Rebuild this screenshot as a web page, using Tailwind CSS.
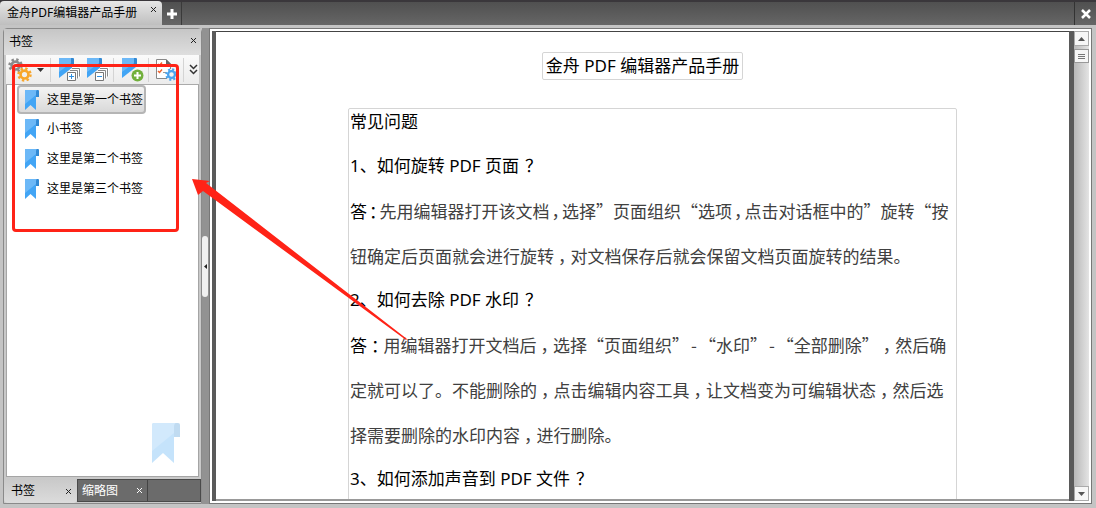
<!DOCTYPE html>
<html lang="zh-CN">
  <head>
    <meta charset="UTF-8" />
    <meta name="viewport" content="width=device-width, initial-scale=1.0" />
    <title>金舟PDF编辑器产品手册</title>
    <script src="https://cdn.jsdelivr.net/npm/@tailwindcss/browser@4"></script>
  </head>
  <body class="relative flex h-screen flex-col overflow-hidden bg-[#c4c4c4] font-['Noto_Sans','Noto_Sans_CJK_SC',sans-serif] text-xs text-black">
    <!-- Shared icon shapes -->
    <svg class="hidden">
      <symbol id="bookmark" viewBox="0 0 14 20">
        <path d="M11 0h2q1 0 1 1v6h-3z" fill="#3289d3" />
        <path d="M0 1q0-1 1-1h11q-1 0-1 2v18l-5.500-5L0 20z" fill="#42a5f5" />
        <path d="M0 1q0-1 1-1h11q-1 0-1 2v3L0 14z" fill="#6cb8f7" />
      </symbol>
      <symbol id="bookmark-wide" viewBox="0 0 15 20">
        <path d="M0 1q0-1 1-1h13v9L0 20z" fill="#42a5f5" />
        <path d="M0 1q0-1 1-1h11v5L0 14z" fill="#6cb8f7" />
        <path d="M12 0h2q1 0 1 1v5h-3z" fill="#3289d3" />
      </symbol>
      <symbol id="gear" viewBox="-8 -8 16 16">
        <circle r="4.200" fill="none" stroke="currentColor" stroke-width="2.800" />
        <circle r="6.400" fill="none" stroke="currentColor" stroke-width="2.600" stroke-dasharray="2.500 2.526" />
      </symbol>
    </svg>

    <!-- Document tabs -->
    <header class="flex h-[25px] shrink-0 border-t-2 border-[#3a373b] bg-linear-to-b from-[#505050] to-[#666]">
      <div class="-mt-px flex w-[162px] items-center justify-between rounded-t-sm bg-linear-to-b from-[#e6e6e6] to-[#bfbfbf] pr-[5px] pl-[7px]">
        <span class="whitespace-nowrap">金舟PDF编辑器产品手册</span>
        <button class="mb-2" aria-label="关闭文档">
          <svg class="size-[7px]" viewBox="0 0 7 7"><path d="M1 1l5 5M6 1L1 6" stroke="#222" /></svg>
        </button>
      </div>
      <button class="flex w-5 items-center justify-center border-r border-[#3a3a3a]" aria-label="新建标签">
        <svg class="size-[10px]" viewBox="0 0 10 10"><path d="M5 0v10M0 5h10" stroke="#fff" stroke-width="3" /></svg>
      </button>
      <div class="flex-1"></div>
      <button class="flex w-[22px] items-center justify-center border-l border-[#333]" aria-label="关闭">
        <svg class="size-[10px]" viewBox="0 0 10 10"><path d="M1 1l8 8M9 1L1 9" stroke="#fff" stroke-width="2.500" /></svg>
      </button>
    </header>

    <div class="flex min-h-0 flex-1 pt-[3px] pr-1 pb-1 pl-[3px]">
      <!-- Bookmark panel -->
      <aside class="flex w-[199px] shrink-0 flex-col rounded-t-sm border border-[#8a8a8a] bg-[#c9c9c9]">
        <div class="flex h-[26px] shrink-0 items-center justify-between bg-linear-to-b from-[#c6c6c6] to-[#dedede] pr-1 pl-[5px]">
          <h2>书签</h2>
          <button class="mb-1" aria-label="关闭面板">
            <svg class="size-[7px]" viewBox="0 0 7 7"><path d="M1 1l5 5M6 1L1 6" stroke="#222" /></svg>
          </button>
        </div>
        <div class="mx-[2px] flex h-[30px] shrink-0 items-center border-b border-[#aaa] bg-linear-to-b from-[#fafafa] to-[#ececec] pl-[2px]">
          <button aria-label="选项">
            <svg class="h-6 w-6" viewBox="0 0 24 24">
              <use href="#gear" x="0" y="0" width="15" height="15" class="text-[#8b8b8b]" />
              <use href="#gear" x="9" y="9" width="15" height="15" class="text-[#f8a62b]" />
            </svg>
          </button>
          <button class="ml-[5px]" aria-label="更多选项">
            <svg class="h-1 w-[7px]" viewBox="0 0 7 4"><path d="M0 0h7L3.500 4z" fill="#333" /></svg>
          </button>
          <span class="ml-[6px] h-6 w-px bg-[#d4d4d4]"></span>
          <button class="ml-2" aria-label="展开全部书签">
            <svg class="h-6 w-[22px]" viewBox="0 0 22 24">
              <use href="#bookmark-wide" width="15" height="20" />
              <path d="M13 10.500h7.500v8M11 12.500h7.500v8" fill="none" stroke="#fff" stroke-width="3" />
              <path d="M13 10.500h7.500v8M11 12.500h7.500v8" fill="none" stroke="#888" />
              <path d="M8.500 14.500h8v8h-8z" fill="#fff" stroke="#777" />
              <path d="M12.500 16v5M10 18.500h5" stroke="#2f8fe0" />
            </svg>
          </button>
          <button class="ml-[6px]" aria-label="折叠全部书签">
            <svg class="h-6 w-[22px]" viewBox="0 0 22 24">
              <use href="#bookmark-wide" width="15" height="20" />
              <path d="M13 10.500h7.500v8M11 12.500h7.500v8" fill="none" stroke="#fff" stroke-width="3" />
              <path d="M13 10.500h7.500v8M11 12.500h7.500v8" fill="none" stroke="#888" />
              <path d="M8.500 14.500h8v8h-8z" fill="#fff" stroke="#777" />
              <path d="M10 18.500h5" stroke="#2f8fe0" />
            </svg>
          </button>
          <span class="ml-1 h-6 w-px bg-[#d4d4d4]"></span>
          <button class="ml-2" aria-label="添加书签">
            <svg class="h-6 w-[22px]" viewBox="0 0 22 24">
              <use href="#bookmark-wide" width="15" height="20" />
              <circle cx="15.500" cy="17.500" r="6" fill="#72b03c" />
              <path d="M15.500 14v7M12 17.500h7" stroke="#fff" stroke-width="2" />
            </svg>
          </button>
          <span class="ml-1 h-6 w-px bg-[#d4d4d4]"></span>
          <button class="ml-[6px]" aria-label="书签属性">
            <svg class="h-6 w-[23px]" viewBox="0 0 23 24">
              <path d="M12 20.500H1.500v-19H11l4.500 4.500v5" fill="#fff" stroke="#888" />
              <path d="M11 1v5h5z" fill="#666" />
              <path d="M3 6l1.500 1.500L7 4.500M3 13l1.500 1.500L7 11.500" fill="none" stroke="#f0642f" stroke-width="1.500" />
              <path d="M8 8.500h4M8 14.500h3" stroke="#999" />
              <use href="#gear" x="10" y="10" width="13" height="13" class="text-[#4aa3ee]" />
            </svg>
          </button>
          <span class="ml-[5px] h-6 w-px bg-[#d4d4d4]"></span>
          <button class="ml-[5px]" aria-label="更多工具">
            <svg class="h-[11px] w-[9px]" viewBox="0 0 9 11"><path d="M1 1l3.500 3.500L8 1M1 6l3.500 3.500L8 6" fill="none" stroke="#333" stroke-width="1.500" /></svg>
          </button>
        </div>
        <div class="relative mx-[2px] min-h-0 flex-1 border border-t-0 border-[#a5a5a5] bg-white pl-[10px]">
          <ul>
            <li><button class="flex h-[29px] items-center rounded-sm border-2 border-[#b5b5b5] bg-linear-to-b from-[#f4f4f4] to-[#d9d9d9] pr-px pl-[6px]"><svg class="mr-2 h-5 w-[14px]"><use href="#bookmark" /></svg>这里是第一个书签</button></li>
            <li><button class="flex h-[30px] items-center pl-2"><svg class="mr-2 h-5 w-[14px]"><use href="#bookmark" /></svg>小书签</button></li>
            <li><button class="flex h-[30px] items-center pl-2"><svg class="mr-2 h-5 w-[14px]"><use href="#bookmark" /></svg>这里是第二个书签</button></li>
            <li><button class="flex h-[30px] items-center pl-2"><svg class="mr-2 h-5 w-[14px]"><use href="#bookmark" /></svg>这里是第三个书签</button></li>
          </ul>
          <svg class="absolute right-[18px] bottom-[13px] h-10 w-7 opacity-30"><use href="#bookmark" /></svg>
        </div>
        <nav class="flex h-[26px] shrink-0 pt-[2px]">
          <div class="flex w-[73px] items-center justify-between rounded-b-sm bg-linear-to-b from-[#c9c9c9] to-[#dcdcdc] pr-[5px] pl-[7px]">
            <button>书签</button>
            <button aria-label="关闭书签"><svg class="size-[7px]" viewBox="0 0 7 7"><path d="M1 1l5 5M6 1L1 6" stroke="#222" /></svg></button>
          </div>
          <div class="mb-px flex flex-1 border border-[#4a4a4a] bg-[#6b6b6b] text-white">
            <div class="flex w-[70px] items-center justify-between border-r border-[#444] pr-1 pl-1">
              <button>缩略图</button>
              <button aria-label="关闭缩略图"><svg class="size-[7px]" viewBox="0 0 7 7"><path d="M1 1l5 5M6 1L1 6" stroke="#fff" /></svg></button>
            </div>
          </div>
        </nav>
      </aside>

      <!-- Splitter -->
      <div class="flex w-[7px] shrink-0 items-center bg-[#929292]">
        <button class="flex h-[61px] w-[6px] items-center justify-center rounded-full bg-[#f0f0f0]" aria-label="收起面板">
          <svg class="h-[5px] w-[3px]" viewBox="0 0 3 5"><path d="M3 0v5L0 2.500z" fill="#222" /></svg>
        </button>
      </div>

      <!-- Page view -->
      <main class="flex min-w-0 flex-1 border border-[#777] bg-white p-[2px]">
        <div class="w-1 shrink-0 bg-[#5a5a5a]"></div>
        <article class="min-w-0 flex-1 overflow-hidden border-t border-b-2 border-t-[#444] border-b-[#999] pt-5 text-[17px] leading-[45px]">
          <h1 class="mx-auto w-fit rounded-xs border border-[#d5d5d5] px-[3px] leading-[26px]">金舟 PDF 编辑器产品手册</h1>
          <div class="mt-7 mr-[112px] ml-[132px] rounded-t-xs border border-[#d5d5d5] pl-px whitespace-nowrap [text-spacing-trim:space-all]">
            <h2 class="-mt-[10px]">常见问题</h2>
            <h3 class="leading-[44px]">1、如何旋转 PDF 页面<span class="pl-[6px]">？</span></h3>
            <div class="font-['Noto_Sans_CJK_SC',sans-serif] text-[#404040]">
              <p><span class="text-black">答<span class="px-[2px] [font-feature-settings:'halt']">：</span></span>先用编辑器打开该文档<span class="px-[2px] [font-feature-settings:'halt']">，</span>选择”页面组织“选项<span class="px-[2px] [font-feature-settings:'halt']">，</span>点击对话框中的”旋转“按</p>
              <p>钮确定后页面就会进行旋转<span class="px-1 [font-feature-settings:'halt']">，</span>对文档保存后就会保留文档页面旋转的结果。</p>
            </div>
            <h3 class="leading-[44px]">2、如何去除 PDF 水印<span class="pl-[6px]">？</span></h3>
            <div class="font-['Noto_Sans_CJK_SC',sans-serif] text-[#404040]">
              <p><span class="text-black">答<span class="px-1 [font-feature-settings:'halt']">：</span></span>用编辑器打开文档后<span class="px-1 [font-feature-settings:'halt']">，</span>选择“页面组织”<span class="px-[2px]">-</span>“水印”<span class="px-[2px]">-</span>“全部删除”<span class="px-1 [font-feature-settings:'halt']">，</span>然后确</p>
              <p>定就可以了。不能删除的<span class="px-1 [font-feature-settings:'halt']">，</span>点击编辑内容工具<span class="px-1 [font-feature-settings:'halt']">，</span>让文档变为可编辑状态<span class="px-1 [font-feature-settings:'halt']">，</span>然后选</p>
              <p>择需要删除的水印内容<span class="px-1 [font-feature-settings:'halt']">，</span>进行删除。</p>
            </div>
            <h3 class="leading-[44px]">3、如何添加声音到 PDF 文件<span class="pl-[6px]">？</span></h3>
          </div>
        </article>
        <div class="w-[5px] shrink-0 bg-[#5a5a5a]"></div>
        <!-- Scrollbar -->
        <div class="flex w-[15px] shrink-0 flex-col bg-linear-to-r from-[#b8b8b8] to-[#e4e4e4]">
          <button class="flex h-[15px] items-center justify-center border border-[#aaa] bg-[#f6f6f6]" aria-label="向上滚动">
            <svg class="h-1 w-[7px]" viewBox="0 0 7 4"><path d="M3.500 0L7 4H0z" fill="#555" /></svg>
          </button>
          <button class="mt-[3px] flex h-[14px] items-center justify-center border border-[#999] bg-[#f6f6f6]" aria-label="滚动滑块">
            <svg class="h-[5px] w-[7px]" viewBox="0 0 7 5"><path d="M0 .5h7M0 2.500h7M0 4.500h7" stroke="#777" /></svg>
          </button>
          <div class="flex-1"></div>
          <button class="flex h-[15px] items-center justify-center border border-[#aaa] bg-[#f6f6f6]" aria-label="向下滚动">
            <svg class="h-1 w-[7px]" viewBox="0 0 7 4"><path d="M0 0h7L3.500 4z" fill="#555" /></svg>
          </button>
        </div>
      </main>
    </div>

    <!-- Red highlight and arrow over the bookmark list -->
    <div class="pointer-events-none absolute top-16 left-3 h-[168px] w-[167px] rounded-sm border-3 border-[#ff2317]"></div>
    <svg class="pointer-events-none absolute top-[179px] left-[192px] h-[162px] w-[216px]" viewBox="0 0 216 162">
      <path d="M0 0l18 2-4 2L215 160l-1 1L11 12l-5 4z" fill="#ff2317" />
    </svg>
  </body>
</html>
